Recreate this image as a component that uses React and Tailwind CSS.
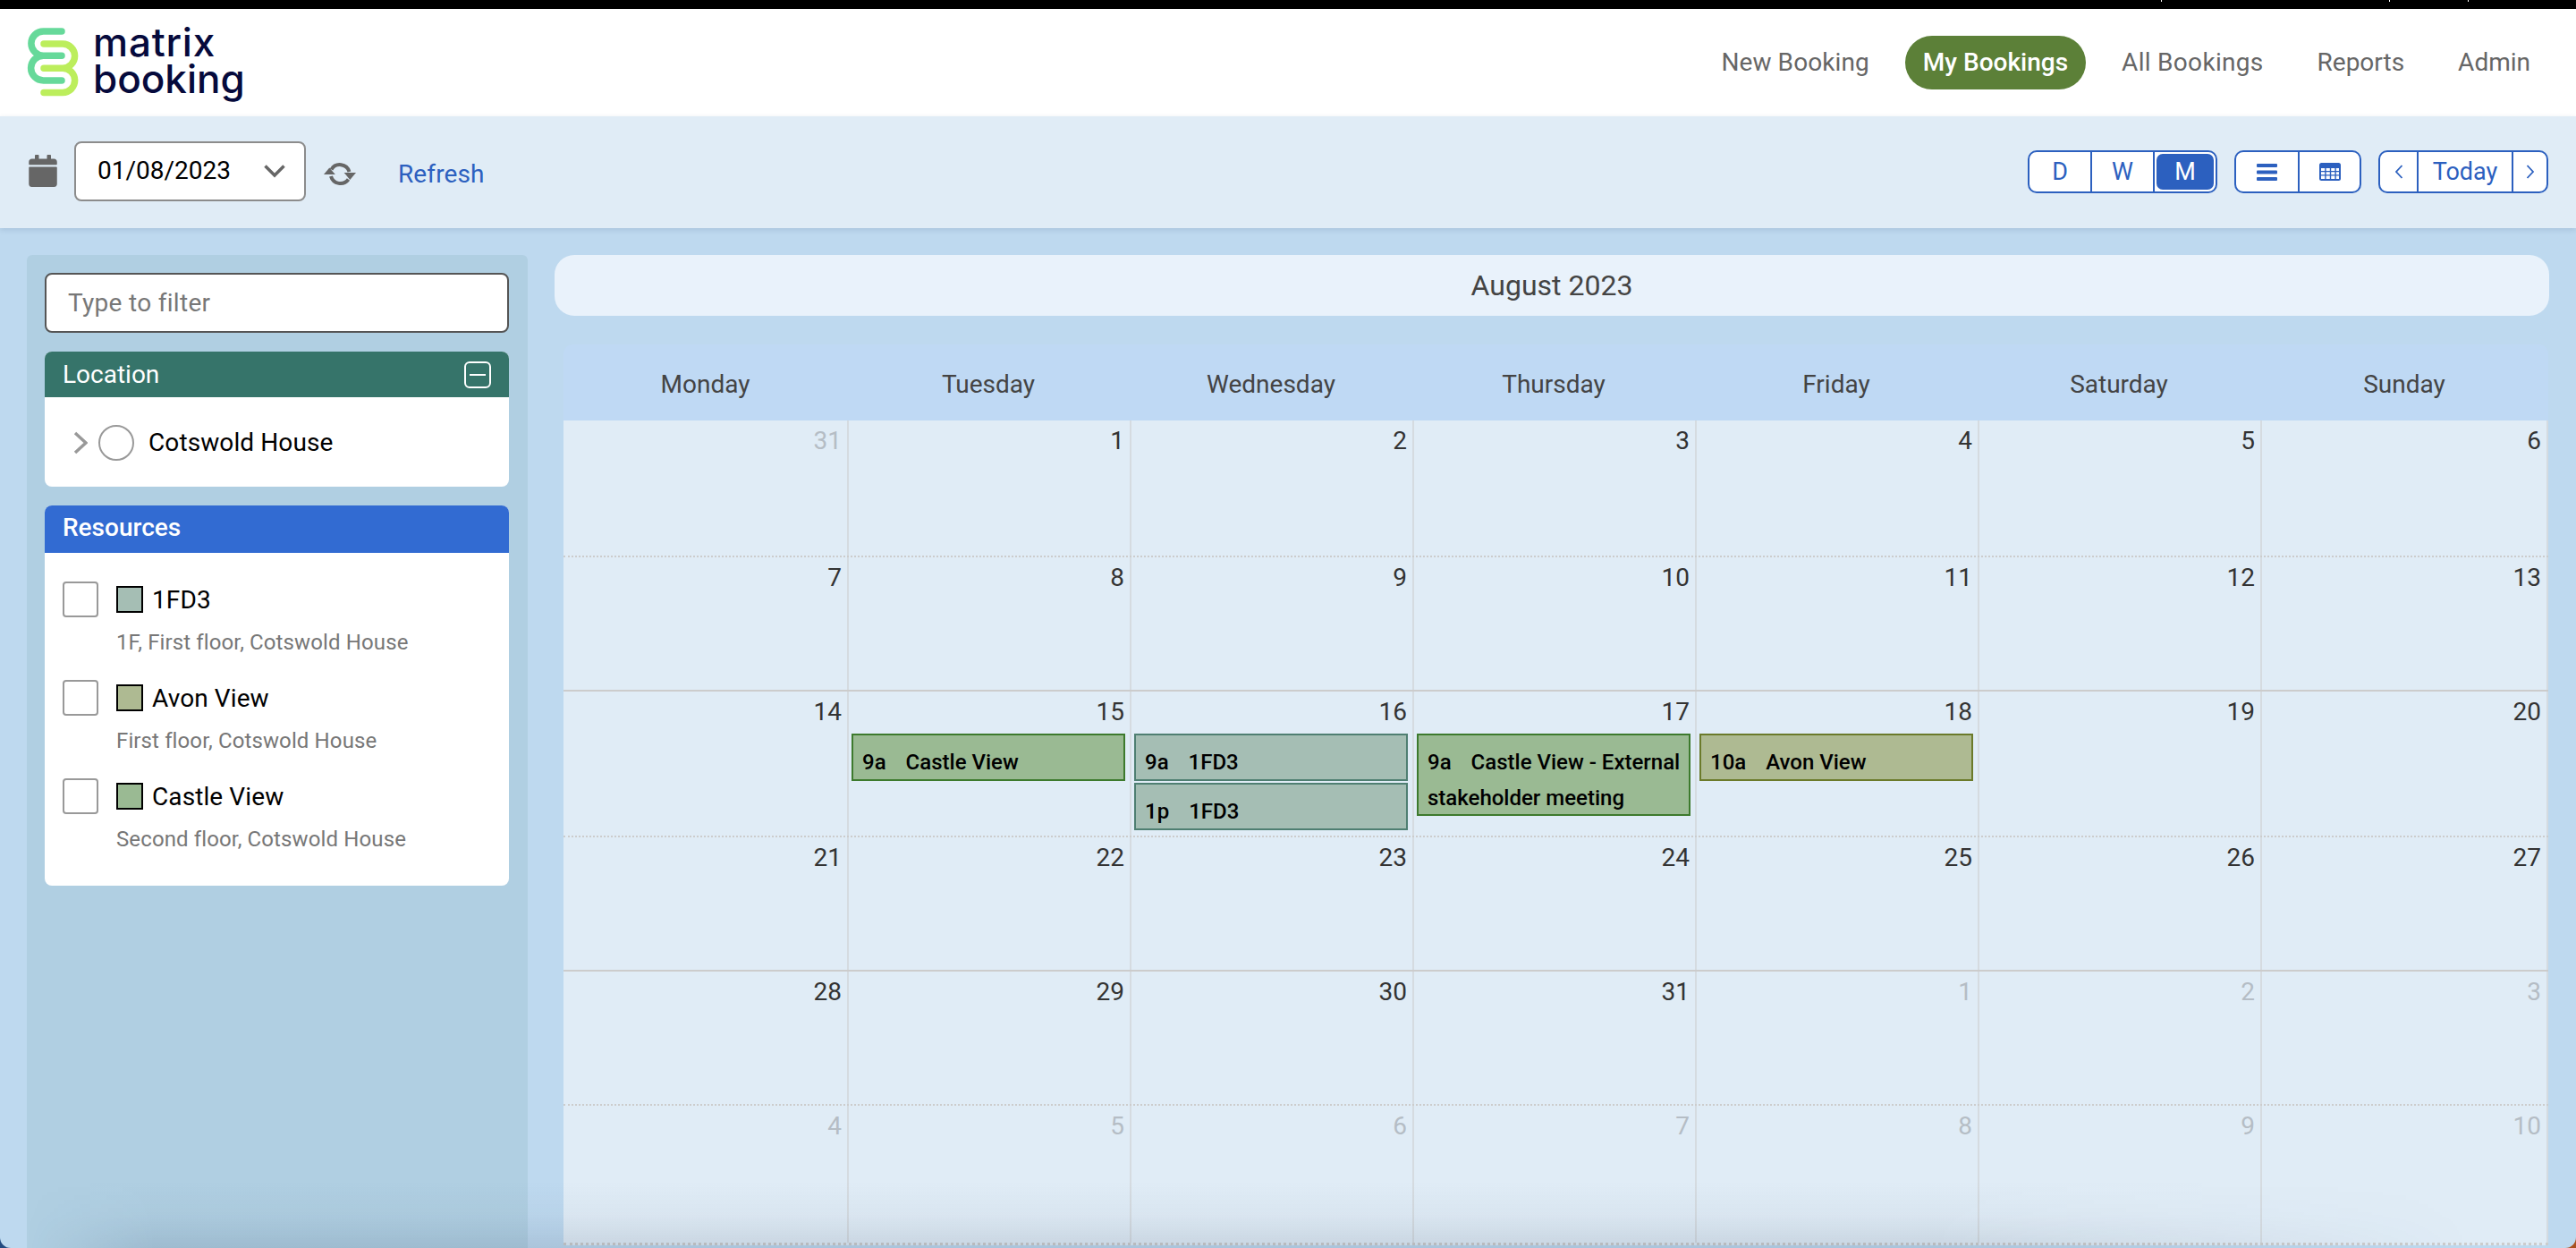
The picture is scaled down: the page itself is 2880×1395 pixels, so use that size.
import React from "react";
import { FaCalendar } from "react-icons/fa";

function Logo() {
  return (
    <div className="flex items-center h-full">
      <svg width="100" height="120" viewBox="0 0 100 120" className="shrink-0">
        <g transform="translate(0,-10)" fill="none" strokeWidth="7.5" strokeLinecap="round">
          <path d="M69 35H48.5a13.6 13.6 0 0 0 0 27.2H69M48.5 62.2a13.9 13.9 0 0 0 0 27.8H69" stroke="#66d99a" />
          <path d="M49 49H70a13.6 13.6 0 0 1 0 27.2H49M70 76.2a13.6 13.6 0 0 1 0 27.3H49" stroke="#bcee5c" />
        </g>
      </svg>
      <div className="ml-[4px] font-['Inter',sans-serif] font-medium text-[#060a3c] text-[44px] leading-[41px] -mt-[5px]">
        <div className="tracking-[0.8px]">matrix</div>
        <div>booking</div>
      </div>
    </div>
  );
}

const navItems = [
  { n: "New Booking", c: "text-[#666666] tracking-[0.1px]" },
  { n: "My Bookings", c: "rounded-[30px] bg-[#5c8038] text-white font-medium" },
  { n: "All Bookings", c: "text-[#666666] tracking-[0.3px]" },
  { n: "Reports", c: "text-[#666666]" },
  { n: "Admin", c: "text-[#666666]" },
];

function Nav() {
  return (
    <div className="h-[120px] bg-white flex items-center justify-between pr-[31px] shrink-0">
      <Logo />
      <div className="flex items-center gap-5 text-[28px]">
        {navItems.map((i) => (
          <div key={i.n} className={"h-[60px] flex items-center px-5 " + i.c}>
            {i.n}
          </div>
        ))}
      </div>
    </div>
  );
}

function Seg({ w, last, active, children }) {
  return (
    <div
      className={
        "flex items-center justify-center h-full text-[#2c60bf] text-[27px] " +
        (last ? "" : "border-r-2 border-[#2c60bf]")
      }
      style={{ width: w }}
    >
      {active ? (
        <div className="w-full h-full p-[2px]">
          <div className="w-full h-full rounded-[7px] bg-[#2c60bf] text-white flex items-center justify-center">{children}</div>
        </div>
      ) : (
        children
      )}
    </div>
  );
}

function Group({ children }) {
  return <div className="flex h-[48px] bg-white border-2 border-[#2c60bf] rounded-[10px] overflow-hidden">{children}</div>;
}

function SyncIcon() {
  return (
    <svg width="36" height="28" viewBox="0 0 36 28" className="ml-[20px] mt-[4px]" fill="#666666">
      <path d="M8.5 8.5A11 11 0 0 1 28.5 11M27.5 19.5A11 11 0 0 1 8 16" fill="none" stroke="#666666" strokeWidth="4" />
      <path d="M6.3 6.5L12.8 14H0Z" />
      <path d="M29.3 20L22.7 12H36Z" />
    </svg>
  );
}

function Toolbar() {
  return (
    <div className="relative z-10 h-[125px] shrink-0 bg-[#e0ecf6] flex items-center justify-between pl-[32px] pr-[31px] shadow-[0_2px_6px_rgba(40,70,110,0.15)]">
      <div className="flex items-center">
        <FaCalendar className="text-[#666666] w-[32px] h-[36px] -mt-[4px]" />
        <div className="ml-[19px] w-[259px] h-[67px] -mt-[3px] bg-white border-2 border-[#8c8c8c] rounded-[8px] flex items-center justify-between pl-[24px] pr-[20px] text-[28px] text-black">
          <span>01/08/2023</span>
          <svg width="26" height="16" viewBox="0 0 26 16" fill="none">
            <path d="M2.5 2.5L13 13L23.5 2.5" stroke="#666666" strokeWidth="3.5" />
          </svg>
        </div>
        <SyncIcon />
        <span className="ml-[47px] mt-[4px] text-[28px] tracking-[0.1px] text-[#2c60bf]">Refresh</span>
      </div>
      <div className="flex items-center gap-[19px] -mt-[1px]">
        <Group>
          <Seg w={70}>D</Seg>
          <Seg w={70}>W</Seg>
          <Seg w={68} last active>M</Seg>
        </Group>
        <Group>
          <Seg w={71}>
            <svg width="23" height="19" viewBox="0 0 23 19" fill="#2c60bf">
              <rect width="23" height="4" y="0" rx="1" />
              <rect width="23" height="4" y="7.5" rx="1" />
              <rect width="23" height="4" y="15" rx="1" />
            </svg>
          </Seg>
          <Seg w={67} last>
            <svg width="24" height="20" viewBox="0 0 24 20">
              <rect width="24" height="20" rx="2.5" fill="#2c60bf" />
              <path
                fill="#ffffff"
                d="M2 6h4.2v3H2zM7.6 6h4.2v3H7.6zM13.2 6h4.2v3h-4.2zM18.8 6H22v3h-3.2zM2 10.2h4.2v3H2zM7.6 10.2h4.2v3H7.6zM13.2 10.2h4.2v3h-4.2zM18.8 10.2H22v3h-3.2zM2 14.4h4.2V18H2zM7.6 14.4h4.2V18H7.6zM13.2 14.4h4.2V18h-4.2zM18.8 14.4H22V18h-3.2z"
              />
            </svg>
          </Seg>
        </Group>
        <Group>
          <Seg w={43}>
            <svg width="10" height="16" viewBox="0 0 10 16" fill="none" stroke="#2c60bf" strokeWidth="1.8"><path d="M8.5 1L2 8L8.5 15" /></svg>
          </Seg>
          <Seg w={106}>Today</Seg>
          <Seg w={37} last>
            <svg width="10" height="16" viewBox="0 0 10 16" fill="none" stroke="#2c60bf" strokeWidth="1.8"><path d="M1.5 1L8 8L1.5 15" /></svg>
          </Seg>
        </Group>
      </div>
    </div>
  );
}

const resources = [
  { name: "1FD3", sub: "1F, First floor, Cotswold House", color: "bg-[#a5beb4]" },
  { name: "Avon View", sub: "First floor, Cotswold House", color: "bg-[#aeba92]" },
  { name: "Castle View", sub: "Second floor, Cotswold House", color: "bg-[#9aba93]" },
];

function Sidebar() {
  return (
    <div className="w-[560px] shrink-0 bg-[#b0cfe2] rounded-t-[6px] pt-[20px] pl-[20px] pr-[21px]">
      <div className="h-[67px] bg-white border-2 border-[#555555] rounded-[8px] flex items-center pl-[24px] text-[28px] text-[#777777] tracking-[0.3px]">
        Type to filter
      </div>
      <div className="mt-[21px] rounded-[8px] bg-white overflow-hidden h-[151px]">
        <div className="h-[51px] bg-[#36746a] text-white text-[28px] flex items-center justify-between pl-[20px] pr-[20px]">
          <span>Location</span>
          <div className="w-[30px] h-[30px] border-2 border-white rounded-[6px] flex items-center justify-center">
            <div className="w-[18px] h-[2px] bg-white" />
          </div>
        </div>
        <div className="flex items-center h-[100px] pl-[32px] pt-[1px]">
          <svg width="16" height="26" viewBox="0 0 16 26" fill="none" stroke="#999999" strokeWidth="3.5"><path d="M2 2L14 13L2 24" /></svg>
          <div className="ml-[12px] w-[40px] h-[40px] rounded-full border-2 border-[#999999]" />
          <span className="ml-[16px] text-[28px] text-black tracking-[0.1px]">Cotswold House</span>
        </div>
      </div>
      <div className="mt-[21px] rounded-[8px] bg-white overflow-hidden h-[425px]">
        <div className="h-[53px] bg-[#326bd2] text-white text-[28px] font-medium flex items-center pl-[20px] pb-[3px]">Resources</div>
        <div className="pt-[32px] pl-[20px] flex flex-col gap-[31px]">
          {resources.map((r) => (
            <div key={r.name} className="h-[79px] flex items-start">
              <div className="w-[40px] h-[40px] border-2 border-[#999999] rounded-[4px] shrink-0" />
              <div className="ml-[20px]">
                <div className="flex items-center h-[40px]">
                  <div className={"w-[30px] h-[30px] border-2 border-black " + r.color} />
                  <span className="ml-[10px] pt-[2px] text-[28px] text-black tracking-[0.1px]">{r.name}</span>
                </div>
                <div className="mt-[14px] text-[24px] leading-[28px] text-[#777777] tracking-[0.12px]">{r.sub}</div>
              </div>
            </div>
          ))}
        </div>
      </div>
    </div>
  );
}

const days = ["Monday", "Tuesday", "Wednesday", "Thursday", "Friday", "Saturday", "Sunday"];
const gridCols = "grid grid-cols-[317px_316px_316px_316px_316px_316px_322px]";

const C = "bg-[#9aba93] border-[#3d7a2d]";
const F = "bg-[#a5beb4] border-[#4f7f72]";
const A = "bg-[#aeba92] border-[#6b7a2a]";

const rows = [
  { h: "h-[151px]", line: "", cells: [[31], 1, 2, 3, 4, 5, 6] },
  { h: "h-[150px]", line: "border-t-2 border-dotted border-[#cccccc]", cells: [7, 8, 9, 10, 11, 12, 13] },
  {
    h: "h-[163px]",
    line: "border-t-2 border-solid border-[#cccccc]",
    cells: [14, 15, 16, 17, 18, 19, 20],
    events: {
      15: [{ t: "9a", n: "Castle View", c: C }],
      16: [{ t: "9a", n: "1FD3", c: F }, { t: "1p", n: "1FD3", c: F }],
      17: [{ t: "9a", n: "Castle View - External stakeholder meeting", c: C, tall: true }],
      18: [{ t: "10a", n: "Avon View", c: A }],
    },
  },
  { h: "h-[150px]", line: "border-t-2 border-dotted border-[#cccccc]", cells: [21, 22, 23, 24, 25, 26, 27] },
  { h: "h-[150px]", line: "border-t-2 border-solid border-[#cccccc]", cells: [28, 29, 30, 31, [1], [2], [3]] },
  { h: "h-[158px]", line: "border-t-2 border-dotted border-[#cccccc] border-b-[3px]", cells: [[4], [5], [6], [7], [8], [9], [10]] },
];

function Event({ e }) {
  return (
    <div
      className={
        "ml-[3px] mr-[5px] border-2 pl-[10px] pr-[2px] text-[24px] leading-[40px] font-medium text-black " +
        e.c +
        (e.tall ? " h-[92px] pt-[10px]" : " h-[53px] pt-[10px] mb-[2px]")
      }
    >
      <span className="mr-[22px]">{e.t}</span>
      {e.n}
    </div>
  );
}

function Calendar() {
  return (
    <div className="w-[2230px] shrink-0 flex flex-col">
      <div className="h-[68px] rounded-[22px] bg-[#e9f2fb] flex items-center justify-center text-[32px] text-[#444444] shrink-0">
        August 2023
      </div>
      <div className="ml-[10px] mt-[32px] w-[2219px] flex flex-col">
        <div className={gridCols + " h-[85px] bg-[#bfd9f4] rounded-t-[10px]"}>
          {days.map((d) => (
            <div key={d} className="flex items-center justify-center pt-[5px] text-[28px] text-[#444444]">
              {d}
            </div>
          ))}
        </div>
        <div className="bg-[#e0ecf6]">
          {rows.map((r, i) => (
            <div key={i} className={gridCols + " " + r.h + " " + r.line}>
              {r.cells.map((c, j) => {
                const muted = Array.isArray(c);
                const num = muted ? c[0] : c;
                const evs = r.events && r.events[num];
                return (
                  <div key={j} className={"flex flex-col border-[#d5dbe0] " + (j > 0 ? "border-l-2 " : "") + (j === 6 ? "border-r-2" : "")}>
                    <div className={"text-right pr-[6px] pt-[2px] leading-[42px] text-[28px] " + (muted ? "text-[#b5bdc5]" : "text-[#333333]")}>{num}</div>
                    {evs && <div className="pt-[3px]">{evs.map((e, k) => <Event key={k} e={e} />)}</div>}
                  </div>
                );
              })}
            </div>
          ))}
        </div>
      </div>
    </div>
  );
}

export default function App() {
  return (
    <div className="relative w-[2880px] h-[1395px] overflow-hidden bg-[linear-gradient(to_right,#234a80_50%,#a85020_50%)] font-['Roboto',sans-serif]">
      <div className="h-full flex flex-col bg-[#bed9ef] rounded-b-[12px] overflow-hidden">
        <div className="relative h-[10px] bg-black shrink-0">
          <div className="absolute left-[2416px] top-0 w-[1px] h-[2px] bg-white" />
          <div className="absolute left-[2671px] top-0 w-[1px] h-[2px] bg-white" />
          <div className="absolute left-[2759px] top-0 w-[1px] h-[2px] bg-white" />
        </div>
        <Nav />
        <Toolbar />
        <div className="flex-1 flex gap-[30px] pt-[30px] pl-[30px]">
          <Sidebar />
          <Calendar />
        </div>
      </div>
      <div className="pointer-events-none absolute inset-x-0 bottom-0 h-[75px] bg-[linear-gradient(to_top,rgba(30,50,80,0.12),rgba(30,50,80,0.03)_50%,transparent)] [mask-image:linear-gradient(to_right,transparent_1%,black_6%,black_75%,transparent_96%)]" />
    </div>
  );
}
